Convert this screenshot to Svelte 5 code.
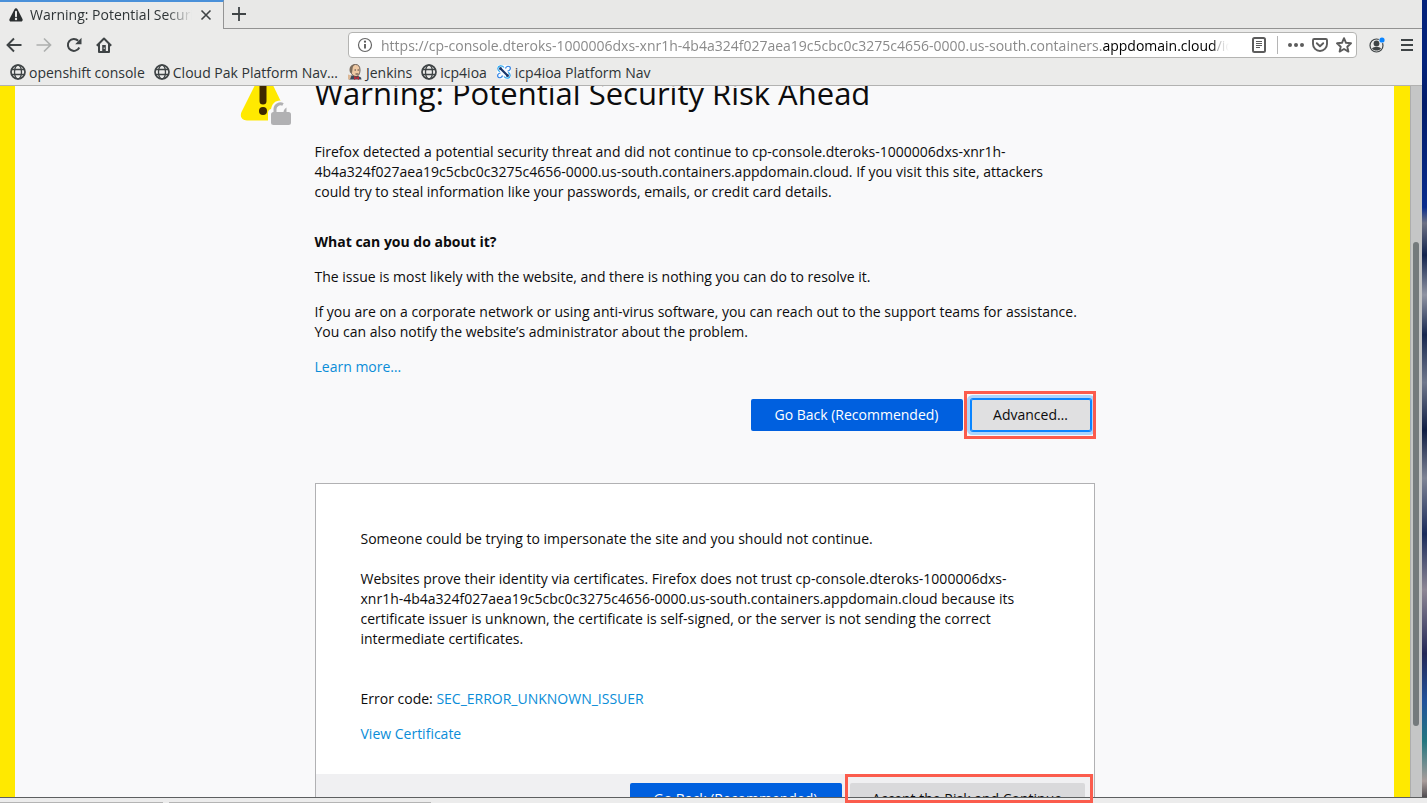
<script>
  const host = 'cp-console.dteroks-1000006dxs-xnr1h-4b4a324f027aea19c5cbc0c3275c4656-0000.us-south.containers.appdomain.cloud';
  const bookmarks = [
    { label: 'openshift console', icon: 'globe' },
    { label: 'Cloud Pak Platform Nav…', icon: 'globe' },
    { label: 'Jenkins', icon: 'jenkins' },
    { label: 'icp4ioa', icon: 'globe' },
    { label: 'icp4ioa Platform Nav', icon: 'nav' }
  ];
</script>

<div class="desktop">
  <div class="browser">
    <header>
      <div class="tabs">
        <div class="tab">
          <svg width="16" height="16" viewBox="0 0 16 16"><path d="M8 1.200c.7 0 1.200.4 1.500 1l5 9.700c.6 1.300-.2 2.700-1.600 2.700H3.100c-1.400 0-2.200-1.400-1.600-2.700l5-9.700c.300-.6.800-1 1.500-1z" fill="#2b2f30"/><path d="M8 4.800v4.400" stroke="#ebebea" stroke-width="2" stroke-linecap="round"/><circle cx="8" cy="12" r="1.200" fill="#ebebea"/></svg>
          <span class="tab-title">Warning: Potential Security</span>
          <button class="icon" aria-label="Close tab"><svg width="16" height="16" viewBox="0 0 16 16"><path d="M3.500 3.500l9 9M12.500 3.500l-9 9" stroke="#3f4446" stroke-width="1.600"/></svg></button>
        </div>
        <div class="tab-rest">
          <button class="icon" aria-label="New tab"><svg width="16" height="16" viewBox="0 0 16 16"><path d="M8 1v14M1 8h14" stroke="#3f4446" stroke-width="1.800"/></svg></button>
        </div>
      </div>

      <nav class="toolbar" aria-label="Navigation">
        <div class="nav-buttons">
          <button class="icon" aria-label="Back"><svg width="16" height="16" viewBox="0 0 16 16"><path d="M15.500 8H1.500M8 1.500L1.500 8 8 14.500" fill="none" stroke="#3f4446" stroke-width="1.900"/></svg></button>
          <button class="icon" aria-label="Forward"><svg width="16" height="16" viewBox="0 0 16 16"><path d="M.5 8h14M8 1.500L14.500 8 8 14.500" fill="none" stroke="#aeb0af" stroke-width="1.700"/></svg></button>
          <button class="icon" aria-label="Reload"><svg width="16" height="16" viewBox="0 0 16 16"><path d="M13.300 10.500A6 6 0 1 1 12.200 3.700" fill="none" stroke="#3f4446" stroke-width="2"/><path d="M15.500.8v6.400H9.200z" fill="#3f4446"/></svg></button>
          <button class="icon" aria-label="Home"><svg width="16" height="16" viewBox="0 0 16 16"><path d="M.8 8.700L8 1.500l7.200 7.200M3 7v8h10V7" fill="none" stroke="#3f4446" stroke-width="2" stroke-linejoin="round"/><path d="M6.200 8h3.600v6H6.200z" fill="#3f4446"/><path d="M8.200 10.500v1.500" stroke="#ebebea"/></svg></button>
        </div>
        <div class="urlbar">
          <button class="icon" aria-label="Site information"><svg width="16" height="16" viewBox="0 0 16 16"><circle cx="8" cy="8" r="6.500" fill="none" stroke="#666" stroke-width="1.200"/><path d="M8 7v4.500" stroke="#555" stroke-width="1.800"/><circle cx="8" cy="4.700" r="1.100" fill="#555"/></svg></button>
          <span class="url">https://cp-console.dteroks-1000006dxs-xnr1h-4b4a324f027aea19c5cbc0c3275c4656-0000.us-south.containers.<b>appdomain.cloud</b>/ic</span>
          <div class="url-actions">
            <button class="icon" aria-label="Reader view"><svg width="16" height="16" viewBox="0 0 16 16"><rect x="2" y="1" width="12" height="14" rx="1.500" fill="none" stroke="#5c5c5c" stroke-width="2"/><path d="M5 4.500h6M5 6.500h6M5 8.500h6M5 10.500h4" stroke="#5c5c5c"/></svg></button>
            <i class="divider"></i>
            <button class="icon" aria-label="Page actions"><svg width="16" height="16" viewBox="0 0 16 16" fill="#5c5c5c"><circle cx="2" cy="8" r="2"/><circle cx="8" cy="8" r="2"/><circle cx="14" cy="8" r="2"/></svg></button>
            <button class="icon" aria-label="Save to Pocket"><svg width="16" height="16" viewBox="0 0 16 16"><path d="M2.200 2h11.600c.7 0 1.200.5 1.200 1.200V7a7 7 0 0 1-14 0V3.200C1 2.500 1.500 2 2.200 2z" fill="none" stroke="#5c5c5c" stroke-width="1.900"/><path d="M4.800 6.200L8 9.300l3.200-3.100" fill="none" stroke="#5c5c5c" stroke-width="1.900" stroke-linecap="round" stroke-linejoin="round"/></svg></button>
            <button class="icon" aria-label="Bookmark this page"><svg width="16" height="16" viewBox="0 0 16 16"><path d="M8 1.200l2 4.600 5 .5-3.700 3.400 1.100 4.900L8 12l-4.400 2.600 1.100-4.900L1 6.300l5-.5z" fill="none" stroke="#5c5c5c" stroke-width="1.900" stroke-linejoin="round"/></svg></button>
          </div>
        </div>
        <div class="nav-end">
          <button class="icon" aria-label="Account"><svg width="16" height="16" viewBox="0 0 16 16"><circle cx="7.500" cy="8.500" r="6.500" fill="none" stroke="#3f4446" stroke-width="1.200"/><circle cx="7.500" cy="6.500" r="2.900" fill="#3f4446"/><path d="M3 11.500c1-1.500 2.500-1.500 4.500-1.500s3.500 0 4.500 1.500c-1 1.400-2.700 2-4.500 2s-3.500-.6-4.500-2z" fill="#3f4446"/><circle cx="13" cy="3" r="3.300" fill="#ebebea"/><circle cx="13" cy="3" r="2.600" fill="#0a84ff"/></svg></button>
          <button class="icon" aria-label="Open menu"><svg width="16" height="16" viewBox="0 0 16 16"><path d="M2 3h12M2 8h12M2 13h12" stroke="#3f4446" stroke-width="2"/></svg></button>
        </div>
      </nav>

      <nav class="bookmarks" aria-label="Bookmarks">
        {#each bookmarks as mark}
          <a href="#top">
            {#if mark.icon === 'globe'}
              <svg width="16" height="16" viewBox="0 0 16 16" fill="none" stroke="#3f4446"><circle cx="8" cy="8" r="7" stroke-width="1.700"/><ellipse cx="8" cy="8" rx="3.500" ry="7" stroke-width="1.300"/><path d="M1.500 5.500h13M1.500 10.500h13" stroke-width="1.300"/></svg>
            {:else if mark.icon === 'jenkins'}
              <svg width="16" height="16" viewBox="0 0 16 16"><path d="M2 15.500l2-4h6l4 2 .5 2z" fill="#3b4a5c"/><path d="M3.500 5.500C3.500 2 5.500.5 8.500.5s4.500 2 4.500 5.500-1.500 6.500-4 6.500-5.500-2.500-5.500-7z" fill="#eec9a4" stroke="#4c403a" stroke-width=".8"/><path d="M3 8.500C1.500 3.500 4 .3 8.500.6 5.500 2 5.800 4 5.500 5.500L5 9z" fill="#7c6c5c"/><path d="M7.500 6H9M10.500 6H12M8.500 10h3" stroke="#4c403a"/><path d="M7 12l2.500 1.500L12 12v4l-2.500-1.500L7 16z" fill="#b52e3b"/><path d="M1 10.500l3.500 1-1.500 4H1z" fill="#dcb896"/></svg>
            {:else}
              <svg width="16" height="16" viewBox="0 0 16 16" fill="none"><rect x="1" y="1" width="14" height="14" rx="3" fill="#f7fbff"/><path d="M4.500 4.500l7 7" stroke="#17356b" stroke-width="2.200"/><circle cx="4.500" cy="4.500" r="1.500" fill="#17356b"/><circle cx="11.500" cy="11.500" r="1.500" fill="#17356b"/><path d="M8 3.500C6 .8 2 1.500 1.800 4.500c0 1.500 1 2.500 2 3.300M8 12.500c2 2.700 6 2 6.200-1 0-1.500-1-2.500-2-3.300" stroke="#2fa8f0" stroke-width="1.200"/><path d="M9.500 4.500c.5-2 2.500-3 4.500-1.500 1 2-.5 4-2.500 4M6.500 11.500c-.5 2-2.500 3-4.500 1.500-1-2 .5-4 2.500-4" stroke="#2f7fe0" stroke-width="1.200"/></svg>
            {/if}
            <span>{mark.label}</span>
          </a>
        {/each}
      </nav>
    </header>

    <div class="viewport">
      <main>
        <article>
          <svg class="warning" width="52" height="52" viewBox="0 0 52 52"><path d="M24 1c3 0 4.700 1.500 6 4l16 33c2 4.500-.5 8.500-5 8.500H7c-5 0-7.500-4-5.500-8.500L18 5c1.300-2.500 3-4 6-4z" fill="#ffe900"/><path d="M23 13v14" stroke="#3e2800" stroke-width="7" stroke-linecap="round"/><circle cx="23" cy="37" r="4" fill="#3e2800"/><path d="M28 52V39c0-2 1-3.500 3-4 1-5 4-8.500 9-8.500s9 3.500 10 8.500l2 2v15z" fill="#f9f9fa"/><path d="M35 39v-4a5.500 5.500 0 0 1 8-4.500" fill="none" stroke="#b1b1b3" stroke-width="3"/><path d="M43.500 39c0-2.500.5-4 3-5.500v5.500z" fill="#b1b1b3"/><rect x="31" y="38" width="20" height="13" rx="2.500" fill="#b1b1b3"/></svg>
          <h1>Warning: Potential Security Risk Ahead</h1>
          <p>Firefox detected a potential security threat and did not continue to cp-console.dteroks-1000006dxs-xnr1h-<wbr>4b4a324f027aea19c5cbc0c3275c4656-0000.us-south.containers.appdomain.cloud. If you visit this site, attackers could try to steal information like your passwords, emails, or credit card details.</p>
          <h2>What can you do about it?</h2>
          <p>The issue is most likely with the website, and there is nothing you can do to resolve it.</p>
          <p>If you are on a corporate network or using anti-virus software, you can reach out to the support teams for assistance. You can also notify the website’s administrator about the problem.</p>
          <p><a href="#learn">Learn more…</a></p>
          <div class="actions">
            <button class="primary">Go Back (Recommended)</button>
            <div class="marked"><button class="secondary focused">Advanced…</button></div>
          </div>
          <section class="details">
            <div class="details-body">
              <p>Someone could be trying to impersonate the site and you should not continue.</p>
              <p class="reason">Websites prove their identity via certificates. Firefox does not trust {host} because its certificate issuer is unknown, the certificate is self-signed, or the server is not sending the correct intermediate certificates.</p>
              <p>Error code: <a href="#code">SEC_ERROR_UNKNOWN_ISSUER</a></p>
              <p><a href="#certificate">View Certificate</a></p>
            </div>
            <div class="details-actions">
              <button class="primary">Go Back (Recommended)</button>
              <button class="secondary accept">Accept the Risk and Continue</button>
            </div>
          </section>
        </article>
      </main>
      <div class="scrollbar"><div class="thumb"></div></div>
      <div class="callout"></div>
    </div>
  </div>
  <div class="wallpaper"></div>
  <footer><i></i><i></i></footer>
</div>

<style>
  :global(body) { margin: 0; overflow: hidden; }
  * { box-sizing: border-box; }
  button { font: inherit; }
  svg { display: block; flex: none; }
  .desktop {
    height: 100vh;
    display: grid;
    grid-template-columns: 1fr 5px;
    grid-template-rows: minmax(0, 1fr) 6px;
    font-family: "Open Sans", "Noto Sans", sans-serif;
    font-size: 14px;
    color: #0c0c0d;
  }
  .browser { display: flex; flex-direction: column; min-width: 0; min-height: 0; }
  .wallpaper {
    background: linear-gradient(180deg, #04237b 0 8%, #031d69 13%, #0a2d8c 26%, #6d7183 28%, #13244d 32%, #9094a2 37%, #18284f 42%, #70788c 48%, #101e43 54%, #7f8495 60%, #1a2b5a 67%, #8e8795 74%, #242857 82%, #21529b 88%, #24777f 93%, #a99d9b 98%, #504d51);
  }
  footer {
    grid-column: 1 / 3;
    border-top: 1px solid #5d5f60;
    background: #ececec;
    display: flex;
    align-items: flex-end;
    gap: 6px;
  }
  footer i { height: 1px; background: #b4b4b4; width: 262px; }
  footer i:first-child { width: 163px; }

  header { background: #ebebea; border-bottom: 1px solid #b2b2b1; color: #2e3436; flex: none; }
  .icon { border: 0; padding: 0; background: none; display: block; flex: none; }
  .tabs { display: flex; height: 29px; }
  .tab {
    width: 224px;
    display: flex;
    align-items: center;
    gap: 6px;
    padding: 0 9px 2px 8px;
    border-top: 2px solid #4a90d9;
    border-right: 1px solid #949494;
  }
  .tab-title {
    flex: 1;
    min-width: 0;
    overflow: hidden;
    white-space: nowrap;
    mask-image: linear-gradient(90deg, #000 84%, transparent);
  }
  .tab-rest { flex: 1; padding: 6px 7px; border-bottom: 1px solid #929292; background: #e8e8e7; }
  .toolbar { display: flex; align-items: center; height: 32px; padding: 0 7px 0 6px; }
  .nav-buttons { display: flex; gap: 14px; margin-right: 236px; }
  .urlbar {
    flex: 1;
    min-width: 0;
    height: 26px;
    display: flex;
    align-items: center;
    gap: 8px;
    padding: 0 4px 0 8px;
    border: 1px solid #b4b4b2;
    border-radius: 4px;
    background: #fff;
  }
  .url {
    flex: 1;
    min-width: 0;
    overflow: hidden;
    white-space: nowrap;
    color: #8a8a8a;
    mask-image: linear-gradient(90deg, #000 98%, transparent);
  }
  .url b { font-weight: 400; color: #000; }
  .url-actions { display: flex; align-items: center; gap: 8px; margin-left: 14px; }
  .divider { width: 1px; height: 18px; background: #b5b5b5; margin: 0 2px; }
  .nav-end { display: flex; gap: 14px; margin-left: 12px; }
  .bookmarks { display: flex; gap: 9px; height: 24px; padding: 0 10px 2px; }
  .bookmarks a { display: flex; align-items: center; gap: 3px; color: inherit; text-decoration: none; white-space: nowrap; }

  .viewport { flex: 1; min-height: 0; display: flex; position: relative; }
  main {
    flex: 1;
    min-width: 0;
    overflow: hidden;
    background: #f9f9fa;
    border: solid #ffe900;
    border-width: 0 16px 0 15px;
  }
  article { width: 780px; max-width: 100%; margin: -13px auto 0; position: relative; }
  .warning { position: absolute; left: -75px; top: 1px; }
  h1 { margin: 0 0 29px; font-size: 31px; line-height: 40px; font-weight: 400; }
  h2 { margin: 30px 0 15px; font-size: 14px; line-height: 20px; font-weight: 700; }
  p { max-width: 765px; margin: 0 0 15px; line-height: 20px; }
  main a { color: #0a8dd8; text-decoration: none; }
  .actions { display: flex; justify-content: flex-end; gap: 8px; margin: 22px 4px 52px 0; }
  .primary, .secondary { height: 32px; border: 0; border-radius: 2px; padding: 0 0 2px; }
  .primary { width: 212px; background: #0060df; color: #fff; }
  .secondary { width: 120px; background: #e0e0e1; color: #0c0c0d; }
  .focused { box-shadow: 0 0 0 1px #0a84ff, inset 0 0 0 1px #0a84ff, 0 0 0 4px #abd5fc; }
  .marked { position: relative; }
  .marked::after { content: ""; position: absolute; inset: -8px -5px -8px -7px; border: 3px solid #fb5c4d; }
  .details { border: 1px solid #b1b1b3; background: #fff; }
  .details-body { padding: 45px 45px 30px; }
  .details-body p:first-child { margin-bottom: 20px; }
  .details-body .reason { margin-bottom: 40px; }
  .details-body p:last-child { margin-bottom: 0; }
  .details-actions { display: flex; justify-content: flex-end; gap: 8px; padding: 9px; background: #f0f0f2; }
  .accept { width: 235px; background: #d9d9db; }
  .scrollbar { width: 12px; background: #c5c6c6; border-left: 1px solid #adadad; position: relative; }
  .thumb { position: absolute; top: 22%; left: 2px; width: 6px; height: 68%; border-radius: 3px; background: #747a7c; }
  .callout {
    position: absolute;
    left: calc(50% + 134px);
    bottom: -6px;
    width: 248px;
    height: 29px;
    border: 3px solid #fb5c4d;
    z-index: 1;
  }
</style>
